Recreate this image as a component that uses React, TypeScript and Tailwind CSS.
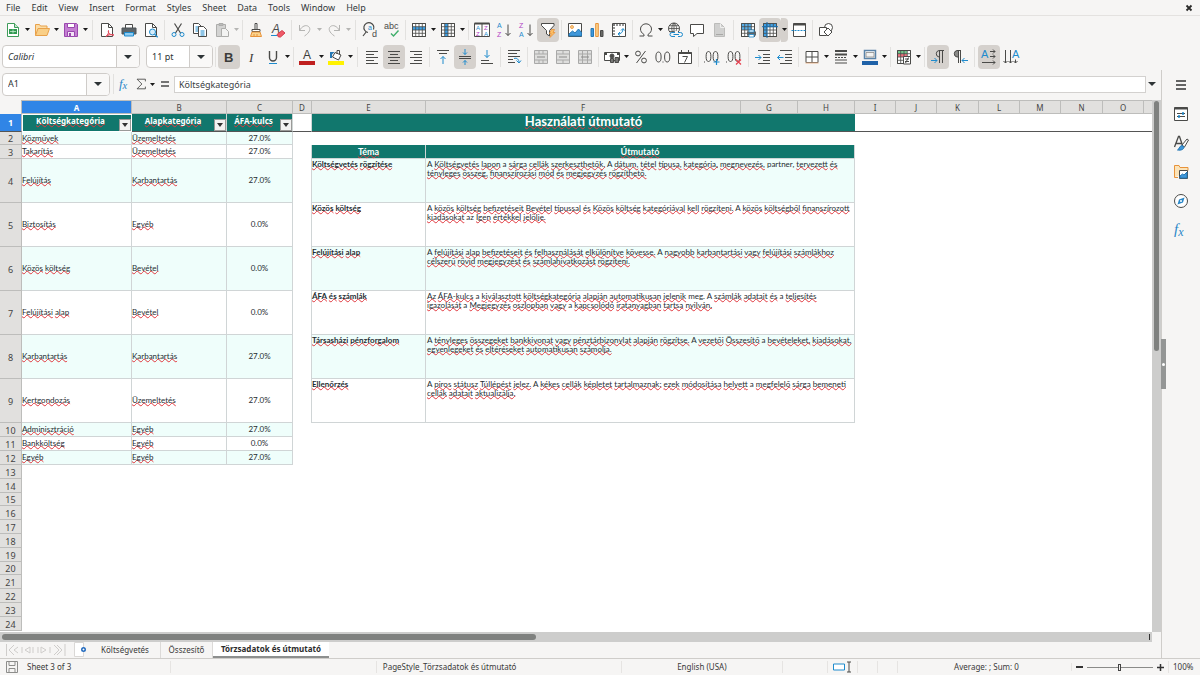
import type { ReactNode } from "react";

const G = "#4a4a48";
const B = "#1e8bcd";

/* ---------- building blocks ---------- */

function Icon({ children, className = "h-4 w-4" }: { children: ReactNode; className?: string }) {
  return (
    <svg viewBox="0 0 16 16" fill="none" stroke={G} className={`overflow-visible ${className}`} aria-hidden="true">
      {children}
    </svg>
  );
}

function Tool({ label, active, children }: { label: string; active?: boolean; children: ReactNode }) {
  return (
    <button
      type="button"
      aria-label={label}
      className={`flex h-6 w-[22px] shrink-0 items-center justify-center rounded-sm ${active ? "bg-[#d5d1cd]" : ""}`}
    >
      <Icon>{children}</Icon>
    </button>
  );
}

function Caret({ off, active }: { off?: boolean; active?: boolean }) {
  return (
    <button
      type="button"
      aria-label="More options"
      className={`flex h-6 w-[7px] shrink-0 items-center justify-center rounded-r-sm ${active ? "bg-[#d5d1cd]" : ""}`}
    >
      <svg viewBox="0 0 5 3" className={`h-[3px] w-[5px] ${off ? "fill-[#b5b5b3]" : "fill-[#1a1a1a]"}`}>
        <path d="M0 0h5L2.5 3z" />
      </svg>
    </button>
  );
}

function Sep({ wide }: { wide?: boolean }) {
  return (
    <div className={`flex h-5 shrink-0 justify-center ${wide ? "w-[7px]" : "w-[5px]"}`}>
      <div className="w-px bg-[#e2e1df]" />
    </div>
  );
}

function Combo({ label, value, className, italic }: { label: string; value: string; className: string; italic?: boolean }) {
  return (
    <div className={`flex h-[23px] shrink-0 overflow-hidden rounded border border-[#cfccc9] bg-white ${className}`}>
      <input
        aria-label={label}
        defaultValue={value}
        className={`w-full min-w-0 flex-1 px-[5px] text-[9px] text-[#2e3436] outline-none ${italic ? "italic" : ""}`}
      />
      <button
        type="button"
        aria-label={`${label} list`}
        className="flex w-[23px] shrink-0 items-center justify-center border-l border-[#cfccc9] bg-[#f9f8f7]"
      >
        <svg viewBox="0 0 8 4" className="h-1 w-2 fill-[#2e3436]">
          <path d="M0 0h8L4 4z" />
        </svg>
      </button>
    </div>
  );
}

/* ---------- icon helpers ---------- */

function Letter({ x, y, size = 8, fill, bold, children }: { x: number; y: number; size?: number; fill: string; bold?: boolean; children: string }) {
  return (
    <text x={x} y={y} fontSize={size} fill={fill} stroke="none" fontWeight={bold ? 700 : 400} fontFamily="Liberation Sans, sans-serif">
      {children}
    </text>
  );
}

function Grid({ fill }: { fill: ReactNode }) {
  return (
    <>
      <path d="M1.5 1.5h13v13h-13z" fill="#fff" />
      {fill}
      <path d="M1.5 1.5h13v13h-13zM4.7 1.5v13M8 1.5v13M11.3 1.5v13M1.5 4.7h13M1.5 8h13M1.5 11.3h13" strokeWidth=".8" />
    </>
  );
}

function Fx() {
  return (
    <text x="1" y="12" fontSize="15" fill="#2a87c8" stroke="none" fontStyle="italic" fontFamily="Liberation Serif, serif">
      f<tspan dy="2" fontSize="12">x</tspan>
    </text>
  );
}

function MergeIcon({ d }: { d: string }) {
  return (
    <>
      <path d="M1.5 1.5h13v13h-13z" fill="#dededd" stroke="#a9a9a8" />
      <path d={d} stroke="#a9a9a8" />
      <path d="M4 8h8" stroke="#8a8a89" />
    </>
  );
}

/* ---------- bars ---------- */

const menus = ["File", "Edit", "View", "Insert", "Format", "Styles", "Sheet", "Data", "Tools", "Window", "Help"];

function MenuBar() {
  return (
    <nav className="flex h-4 items-center gap-px border-b border-[#e4e2e0] pr-[7px] pl-px">
      {menus.map((m) => (
        <button key={m} type="button" className="px-[5px] text-[9px] leading-4 text-[#33393b]">
          {m}
        </button>
      ))}
      <button type="button" aria-label="Close document" className="ml-auto">
        <svg viewBox="0 0 8 8" className="h-2 w-2 stroke-[#2a2a2a]" strokeWidth="1.8">
          <path d="M1.5 1.5l5 5M6.5 1.5l-5 5" />
        </svg>
      </button>
    </nav>
  );
}

function StandardBar() {
  return (
    <div className="flex h-[27px] items-center pl-[2px]">
      <Tool label="New">
        <path d="M2.5 1.5h7l4 4v9h-11z" fill="#fff" stroke="#3f9c5a" />
        <path d="M9.5 1.5v4h4" fill="#c4e5cc" stroke="#3f9c5a" />
        <path d="M4 7h8v5H4z" fill="#2f9a50" stroke="none" />
        <path d="M5 9.500h6M8 7.500v4" stroke="#d6f2dc" strokeWidth=".7" />
      </Tool>
      <Caret />
      <Tool label="Open">
        <path d="M1.500 13.500v-11h4l1 1.500h6.500v3" fill="#fbdca5" stroke="#e8a14a" />
        <path d="M1.500 13.500l2.500-7h11.500l-2.500 7z" fill="#f9cf87" stroke="#e8a14a" />
      </Tool>
      <Caret />
      <Tool label="Save">
        <path d="M1.500 1.500h12l1 1v12h-13z" fill="#c47fd2" stroke="#9a48ae" />
        <path d="M4.500 1.500h7v4h-7z" fill="#fff" stroke="#9a48ae" />
        <path d="M4.500 9.500h7v5h-7z" fill="#f3e4f6" stroke="#9a48ae" />
        <path d="M6 11v3h2v-3z" fill="#9a48ae" stroke="none" />
      </Tool>
      <Caret />
      <Sep wide />
      <Tool label="Export as PDF">
        <path d="M2.500 1.500h7l4 4v9h-11z" fill="#fff" />
        <path d="M9.500 1.500v4h4" />
        <path d="M7 14.500c2-2 3-4 2.500-6-1 2 2 5 5.500 4.500-3-1-6 0-8 1.500z" fill="#f3a1a8" stroke="#e0485a" />
      </Tool>
      <Tool label="Print">
        <path d="M4.500 6V2.500h7V6" fill="#fff" />
        <path d="M1 6h14v6H1z" fill="#5d6468" stroke="#4d5356" />
        <path d="M3.500 10.500h9v3.500h-9z" fill="#8ecbf1" stroke={B} />
      </Tool>
      <Tool label="Print Preview">
        <path d="M2.500 1.500h7l4 4v9h-11z" fill="#fff" />
        <path d="M9.500 1.500v4h4" />
        <circle cx="9.500" cy="10" r="3" fill="#d6edfb" stroke={B} />
        <path d="M11.700 12.200l3 3" stroke={B} strokeWidth="1.300" />
      </Tool>
      <Sep />
      <Tool label="Cut">
        <path d="M4.500 1.500l6 9.500M11.500 1.500L5.500 11" strokeWidth="1.200" />
        <circle cx="4" cy="12.500" r="2" stroke={B} />
        <circle cx="12" cy="12.500" r="2" stroke={B} />
      </Tool>
      <Tool label="Copy">
        <path d="M1.500 1.500h5l3 3v7h-8z" fill="#fff" />
        <path d="M3.500 5h4M3.500 7h3M3.500 9h3" stroke={B} />
        <path d="M6.500 4.500h5l3 3v7h-8z" fill="#fff" />
        <path d="M8.500 9h4M8.500 11h4M8.500 13h4" stroke={B} />
      </Tool>
      <Tool label="Paste">
        <path d="M2.500 2.500h9v12h-9z" fill="#d3d3d2" stroke="#adadab" />
        <path d="M5 1.500h4v2H5z" fill="#bbb" stroke="#adadab" />
        <path d="M7.500 6.500h4l3 3v5h-7z" fill="#f3f3f2" stroke="#adadab" />
      </Tool>
      <Caret off />
      <Sep />
      <Tool label="Clone Formatting">
        <path d="M7 1.500h2v6H7zM4 7.500h8v2H4z" fill="#fff" />
        <path d="M4 10h8l1.500 4.500h-11z" fill="#fbd38d" stroke="#e8933a" />
        <path d="M6 14v-2M9 14v-2" stroke="#e8933a" />
      </Tool>
      <Tool label="Clear Direct Formatting">
        <text x="2" y="11" fontSize="12" fill={G} stroke="none" fontStyle="italic" fontFamily="Liberation Sans, sans-serif">A</text>
        <path d="M1 13.500h6" stroke={B} />
        <path d="M7 12.500l5-4 3 2.500-4.500 4h-2z" fill="#ef5a68" stroke="#d53f4e" />
      </Tool>
      <Sep />
      <Tool label="Undo">
        <path d="M2.500 3v5.500H8M2.500 8.500C5 4 9 2.500 11.500 4.500s1.500 6-4 9.500" stroke="#b3b3b1" />
      </Tool>
      <Caret off />
      <Tool label="Redo">
        <path d="M13.500 3v5.500H8M13.500 8.500C11 4 7 2.500 4.500 4.500s-1.500 6 4 9.500" stroke="#b3b3b1" />
      </Tool>
      <Caret off />
      <Sep wide />
      <Tool label="Find and Replace">
        <path d="M11.500 7.500A5 5 0 1 0 6 10.500M4.500 9.500L1 14" strokeWidth="1.200" />
        <Letter x={6} y={7.500} size={7} fill={B}>a</Letter>
        <Letter x={10} y={15} size={9} fill={G}>d</Letter>
      </Tool>
      <Tool label="Spelling">
        <Letter x={0} y={7} size={9} fill={G}>abc</Letter>
        <path d="M7 11.500l2.500 2.500 5-5.500" stroke="#3fae6a" strokeWidth="1.400" />
      </Tool>
      <Sep />
      <Tool label="Row">
        <Grid fill={<path d="M1.500 4.700h13V8h-13z" fill="#3ea0e6" stroke="none" />} />
      </Tool>
      <Caret />
      <Tool label="Column">
        <Grid fill={<path d="M4.700 1.500H8v13H4.700z" fill="#3ea0e6" stroke="none" />} />
      </Tool>
      <Caret />
      <Sep />
      <Tool label="Sort">
        <path d="M.5 1.500h15v13H.5zM8 2v12" fill="#fff" />
        <path d="M.5 1.500h15" strokeWidth="2" />
        <Letter x={2} y={8} size={6} fill={B}>A</Letter>
        <Letter x={2} y={14} size={6} fill="#b13fc4">Z</Letter>
        <Letter x={10} y={8} size={6} fill="#b13fc4">Z</Letter>
        <Letter x={10} y={14} size={6} fill={B}>A</Letter>
      </Tool>
      <Tool label="Sort Ascending">
        <Letter x={1} y={6} size={7} fill={B}>A</Letter>
        <Letter x={1} y={15} size={7} fill="#b13fc4">Z</Letter>
        <path d="M12 2.500v11M9.500 11l2.500 2.500 2.500-2.500" />
      </Tool>
      <Tool label="Sort Descending">
        <Letter x={1} y={6} size={7} fill="#b13fc4">Z</Letter>
        <Letter x={1} y={15} size={7} fill={B}>A</Letter>
        <path d="M12 2.500v11M9.500 11l2.500 2.500 2.500-2.500" />
      </Tool>
      <Tool label="AutoFilter" active>
        <path d="M1.500 1.500h12.500v2l-4.500 5v5.500l-3-2V8.500l-5-5z" fill="#fff" />
        <path d="M11.500 7.500h3l-1.500 3h2l-5 5 1.200-4H9.500z" fill="#fbbf66" stroke="#e8933a" strokeWidth=".8" />
      </Tool>
      <Sep />
      <Tool label="Insert Image">
        <path d="M1.500 1.500h13v13h-13z" fill="#fff" />
        <circle cx="5" cy="5" r="1.500" fill="#fbd38d" stroke="#e8933a" strokeWidth=".8" />
        <path d="M2 14v-2l3.500-3 2.500 2 3.500-4 3 3.500V14z" fill="#3f97da" stroke="#2578b5" />
      </Tool>
      <Tool label="Insert Chart">
        <path d="M2 6.500h2.500v8H2z" fill="#3f97da" stroke="#2578b5" />
        <path d="M6.700 1.500h2.600v13H6.700z" fill="#fbd38d" stroke="#e8933a" />
        <path d="M11.500 8.500H14v6h-2.500z" fill="#6a6a68" />
      </Tool>
      <Tool label="Pivot Table">
        <path d="M1.500 1.500h13v13h-13z" fill="#fff" />
        <path d="M2 3h12M3 2v12" strokeWidth="1.500" strokeDasharray="2 1" stroke="#777" />
        <path d="M7 12c3 0 5-2 5-5M10 8.500L12 6.500l1.500 2M9 10l-2 2 2 1.500" stroke={B} />
      </Tool>
      <Sep />
      <Tool label="Special Character">
        <path d="M1.500 14h4.500v-1.500C3.500 11 2.500 9 2.500 7a5.500 5.200 0 0 1 11 0c0 2-1 4-3.500 5.500V14h4.500" />
      </Tool>
      <Caret />
      <Tool label="Hyperlink">
        <circle cx="7" cy="6.500" r="5.500" />
        <path d="M7 1v11M1.500 6.500h11M2.500 3.700h9M2.500 9.500h5M7 1c-3 3-3 8 0 11M7 1c3 3 3 6 2 8" strokeWidth=".8" />
        <path d="M6 10h9.500v5H3.500v-5z" fill="#f6f5f4" stroke="none" />
        <path d="M8 10.500H5a2 2 0 0 0 0 4h3M11 10.500h2.500a2 2 0 0 1 0 4H11M6.500 12.500h5.500" stroke={B} />
      </Tool>
      <Tool label="Comment">
        <path d="M1.500 2.500h13v9H8l-3.500 3v-3h-3z" fill="#fff" />
      </Tool>
      <Tool label="Headers and Footers">
        <path d="M3.500 1.500h6l4 4v9h-10z" fill="#d0d0cf" stroke="#bcbcba" />
        <path d="M9.500 1.500v4h4" stroke="#efefee" />
        <path d="M5 12.500h7" stroke="#a8a8a6" />
      </Tool>
      <Sep wide />
      <Tool label="Define Print Area">
        <Grid fill={<path d="M1.500 1.500h10v6.500h-10z" fill="#58aee9" stroke="none" />} />
        <path d="M7 9.500h9v4H7z" fill="#5d6468" stroke="none" />
        <path d="M9 8h5v2H9zM9 12.500h5V15H9z" fill="#fff" stroke={B} strokeWidth=".8" />
      </Tool>
      <Tool label="Freeze Rows and Columns" active>
        <Grid fill={<path d="M1.500 1.500h13v3.200H4.700v9.800H1.500z" fill="#3ea0e6" stroke="none" />} />
        <path d="M5 0v16M0 4.700h16" stroke="#1b70b0" />
      </Tool>
      <Caret active />
      <Tool label="Split Window">
        <path d="M2.500 1.500h12v13h-12z" fill="#fff" />
        <path d="M2.500 2.500h12" strokeWidth="2" />
        <path d="M.5 8.500h15" stroke={B} strokeDasharray="2 1" />
      </Tool>
      <Sep />
      <Tool label="Show Draw Functions">
        <circle cx="10.500" cy="5.500" r="4" fill="#fff" />
        <path d="M1.500 5.500h7v8h-7z" fill="#fff" />
        <path d="M10 6l4 4-4 4-4-4z" fill="#fff" />
      </Tool>
    </div>
  );
}

function FormattingBar() {
  return (
    <div className="flex h-[27px] items-center pl-[2px]">
      <Combo label="Font Name" value="Calibri" italic className="mr-[6px] w-[138px]" />
      <Combo label="Font Size" value="11 pt" className="w-[67px]" />
      <Sep />
      <Tool label="Bold" active>
        <Letter x={3} y={13} size={13} bold fill="#3c3c3a">B</Letter>
      </Tool>
      <Tool label="Italic">
        <text x="6" y="13" fontSize="13" fill="#3c3c3a" stroke="none" fontStyle="italic" fontFamily="Liberation Serif, serif">I</text>
      </Tool>
      <Tool label="Underline">
        <path d="M4.500 2v6.500a3.500 3.500 0 0 0 7 0V2" strokeWidth="1.400" />
        <path d="M4 14.500h8" stroke={B} />
      </Tool>
      <Caret />
      <Sep />
      <Tool label="Font Color">
        <Letter x={4} y={10} size={12} fill="#3c3c3a">A</Letter>
        <path d="M0 12h16v4H0z" fill="#c0201f" stroke="none" />
      </Tool>
      <Caret />
      <Tool label="Highlighting">
        <path d="M7 3.500l6 2.500-2.500 5-6-3z" fill="#fff" />
        <path d="M9 5V1.500h2.500V5" />
        <path d="M2 9V3h4.500L4 5.500V9z" fill="#2578b5" stroke="none" />
        <path d="M0 12h16v4H0z" fill="#fff200" stroke="none" />
      </Tool>
      <Caret />
      <Sep wide />
      <Tool label="Align Left">
        <path d="M2 2.500h12M2 5.500h8M2 8.500h12M2 11.500h8M2 14.500h12" />
      </Tool>
      <Tool label="Center Horizontally" active>
        <path d="M2 2.500h12M4 5.500h8M2 8.500h12M4 11.500h8M2 14.500h12" />
      </Tool>
      <Tool label="Align Right">
        <path d="M2 2.500h12M6 5.500h8M2 8.500h12M6 11.500h8M2 14.500h12" />
      </Tool>
      <Sep />
      <Tool label="Align Top">
        <path d="M2 1.500h12M4 4.500h8" />
        <path d="M8 15V7.500M5.500 10L8 7.500l2.500 2.500" stroke={B} />
      </Tool>
      <Tool label="Center Vertically" active>
        <path d="M2 7.500h12M2 9.500h12" />
        <path d="M8 0v5.500M6 3.500l2 2 2-2M8 16v-4.500M6 13.500l2-2 2 2" stroke={B} />
      </Tool>
      <Tool label="Align Bottom">
        <path d="M2 11.500h8M2 14.500h12" />
        <path d="M8 1v7.500M5.500 6L8 8.500 10.500 6" stroke={B} />
      </Tool>
      <Sep />
      <Tool label="Wrap Text">
        <path d="M2 1.500h12M2 4.500h9M2 7.500h12M2 10.500h5M2 13.500h7" />
        <path d="M8 9.500c3-1 5 1 5 4M10.500 11.500l2.500 2.500 2-2.500" stroke={B} />
      </Tool>
      <Sep />
      <Tool label="Merge and Center">
        <MergeIcon d="M1.500 5h13M1.500 11h13M6 1.500V5M10 1.500V5M6 11v3.500M10 11v3.500" />
      </Tool>
      <Tool label="Merge Cells">
        <MergeIcon d="M1.500 5h13M1.500 11h13M8 1.500V5M8 11v3.500" />
      </Tool>
      <Tool label="Unmerge Cells">
        <MergeIcon d="M5.500 1.500v13M10.500 1.500v13M1.500 5h13M1.500 11h13" />
      </Tool>
      <Sep />
      <Tool label="Format as Currency">
        <path d="M.5 3.500h15v8H.5z" fill="#fff" />
        <path d="M1 4h2v2H1zM13 4h2v2h-2z" fill={G} stroke="none" />
        <circle cx="8" cy="7" r="2" fill={G} />
        <path d="M6.500 9.500h3v4h-3zM11 8.500h3.500v5H11z" fill="#777775" />
      </Tool>
      <Caret />
      <Tool label="Format as Percent">
        <circle cx="5" cy="4.500" r="2.400" />
        <circle cx="11" cy="11.500" r="2.400" />
        <path d="M12.500 2l-9 12" />
      </Tool>
      <Tool label="Format as Number">
        <ellipse cx="3.500" cy="8" rx="2.600" ry="5" />
        <ellipse cx="12.200" cy="8" rx="2.600" ry="5" />
        <path d="M7.500 12.500h1v1h-1z" fill={G} stroke="none" />
      </Tool>
      <Tool label="Format as Date">
        <path d="M1.500 3.500h13v11h-13z" fill="#fff" />
        <path d="M1.500 4h13" strokeWidth="2" />
        <path d="M4.500 1v3M11.500 1v3M5.500 7.500h5l-3 6" />
      </Tool>
      <Sep />
      <Tool label="Add Decimal Place">
        <path d="M0 12.500h1v1H0z" fill={G} stroke="none" />
        <ellipse cx="4.500" cy="7.500" rx="2.400" ry="5" />
        <ellipse cx="11.500" cy="7.500" rx="2.400" ry="5" />
        <path d="M12.500 10v6M9.500 13h6" stroke={B} strokeWidth="1.200" />
      </Tool>
      <Tool label="Delete Decimal Place">
        <path d="M0 12.500h1v1H0z" fill={G} stroke="none" />
        <ellipse cx="4.500" cy="7.500" rx="2.400" ry="5" />
        <ellipse cx="11.500" cy="7.500" rx="2.400" ry="5" />
        <path d="M10 10.500l5 5M15 10.500l-5 5" stroke="#e5404f" strokeWidth="1.200" />
      </Tool>
      <Sep wide />
      <Tool label="Increase Indent">
        <path d="M3 1.500h12M8 5.500h7M8 8.500h7M8 11.500h7M3 14.500h12" />
        <path d="M0 8.500h6M3.500 6L6 8.500 3.500 11" stroke={B} />
      </Tool>
      <Tool label="Decrease Indent">
        <path d="M3 1.500h12M8 5.500h7M8 8.500h7M8 11.500h7M3 14.500h12" />
        <path d="M6.500 8.500h-6M3 6L.5 8.500 3 11" stroke={B} />
      </Tool>
      <Sep />
      <Tool label="Borders">
        <path d="M2 2.500h12v11H2zM8 2.500v11M2 8h12" fill="#fff" />
        <path d="M1.500 14h13" stroke="#e8b48a" />
      </Tool>
      <Caret />
      <Tool label="Border Style">
        <path d="M2 2h12" strokeWidth="2" />
        <path d="M2 5.500h12" strokeWidth="2" />
        <path d="M2 8.500h12" strokeDasharray="2 1" />
        <path d="M2 11h12M2 14h12" />
      </Tool>
      <Caret />
      <Tool label="Border Color">
        <path d="M2.500 1.500h11v8h-11z" fill="#fff" stroke="#5b84a8" strokeWidth="1.500" />
        <path d="M4 3.500h8V8H4z" fill="#f3f3f2" stroke="#8a8a89" strokeWidth=".8" />
        <path d="M0 12h16v4H0z" fill="#1f62a8" stroke="none" />
      </Tool>
      <Caret />
      <Sep />
      <Tool label="Conditional Formatting">
        <Grid fill={<><path d="M2 2h9v3H2z" fill="#74c78c" stroke="none" /><path d="M2 5h9v3H2z" fill="#ee7480" stroke="none" /></>} />
        <path d="M7.500 7.500h7v7.500h-7z" fill="#fff" />
        <path d="M9 10h4M9 12.500h4M12.500 8.500l-3 5.500" />
      </Tool>
      <Caret />
      <Sep />
      <Tool label="Left-To-Right" active>
        <path d="M14 1.500H9a3.300 3.300 0 0 0 0 6.500h.5M9.500 1.500V14M12.500 1.500V14" />
        <path d="M1 11.500h6M4.500 9L7 11.500 4.500 14" stroke={B} />
      </Tool>
      <Tool label="Right-To-Left">
        <path d="M9 1.500H5a3.300 3.300 0 0 0 0 6.500h1.500V1.500" fill="#8a8a88" />
        <path d="M6.500 1.500V14M8.500 1.500V14" />
        <path d="M16 11.500h-6M12.500 9L10 11.500l2.500 2.500" stroke={B} />
      </Tool>
      <Sep wide />
      <Tool label="Text direction from left to right" active>
        <Letter x={0} y={9} size={11} fill={B}>A</Letter>
        <path d="M9 2.500h5M9 7.500h5M1 13.500h13M12 .5l2 2-2 2M12 5.500l2 2-2 2M12 11.500l2 2-2 2" />
      </Tool>
      <Tool label="Text direction from top to bottom">
        <Letter x={9} y={9} size={11} fill={B}>A</Letter>
        <path d="M2.500 1v13M7.500 1v13M12.500 10.500V14M.5 12l2 2 2-2M5.500 12l2 2 2-2M10.500 12l2 2 2-2" />
      </Tool>
    </div>
  );
}

function FormulaBar() {
  return (
    <div className="flex h-[30px] shrink-0 items-center pb-[2px] pl-[2px]">
      <Combo label="Name Box" value="A1" className="w-[108px]" />
      <Sep wide />
      <button type="button" aria-label="Function Wizard" className="flex w-4 justify-center">
        <Icon className="h-[14px] w-[14px]"><Fx /></Icon>
      </button>
      <button type="button" aria-label="Select Function" className="flex w-4 justify-center">
        <Icon className="h-[14px] w-[14px]"><path d="M13 5V2.500H3.500L9 8l-5.500 5.500H13V11" /></Icon>
      </button>
      <Caret />
      <button type="button" aria-label="Formula" className="mx-[3px] flex w-3 justify-center">
        <svg viewBox="0 0 8 6" className="h-[6px] w-2 stroke-[#4a4a48]" strokeWidth="1.5"><path d="M0 1h8M0 5h8" /></svg>
      </button>
      <input
        aria-label="Input line"
        defaultValue="Költségkategória"
        className="h-[17px] min-w-0 flex-1 border border-[#d3d1cf] bg-white px-1 text-[9px] text-[#3a4042] outline-none"
      />
      <button type="button" aria-label="Expand Formula Bar" className="flex w-[15px] justify-center pr-1">
        <svg viewBox="0 0 8 4" className="h-1 w-2 fill-[#2e3436]"><path d="M0 0h8L4 4z" /></svg>
      </button>
    </div>
  );
}

/* ---------- sheet ---------- */

const columns = "ABCDEFGHIJKLMNO".split("");

const categories = [
  ["Közművek", "Üzemeltetés", "27.0%"],
  ["Takarítás", "Üzemeltetés", "27.0%"],
  ["Felújítás", "Karbantartás", "27.0%"],
  ["Biztosítás", "Egyéb", "0.0%"],
  ["Közös költség", "Bevétel", "0.0%"],
  ["Felújítási alap", "Bevétel", "0.0%"],
  ["Karbantartás", "Karbantartás", "27.0%"],
  ["Kertgondozás", "Üzemeltetés", "27.0%"],
  ["Adminisztráció", "Egyéb", "27.0%"],
  ["Bankköltség", "Egyéb", "0.0%"],
  ["Egyéb", "Egyéb", "27.0%"],
];

const guide: Record<number, [string, string, string]> = {
  4: [
    "Költségvetés rögzítése",
    "A Költségvetés lapon a sárga cellák szerkeszthetők. A dátum, tétel típusa, kategória, megnevezés, partner, tervezett és",
    "tényleges összeg, finanszírozási mód és megjegyzés rögzíthető.",
  ],
  5: [
    "Közös költség",
    "A közös költség befizetéseit Bevétel típussal és Közös költség kategóriával kell rögzíteni. A közös költségből finanszírozott",
    "kiadásokat az Igen értékkel jelölje.",
  ],
  6: [
    "Felújítási alap",
    "A felújítási alap befizetéseit és felhasználását elkülönítve kövesse. A nagyobb karbantartási vagy felújítási számlákhoz",
    "célszerű rövid megjegyzést és számlahivatkozást rögzíteni.",
  ],
  7: [
    "ÁFA és számlák",
    "Az ÁFA-kulcs a kiválasztott költségkategória alapján automatikusan jelenik meg. A számlák adatait és a teljesítés",
    "igazolását a Megjegyzés oszlopban vagy a kapcsolódó iratanyagban tartsa nyilván.",
  ],
  8: [
    "Társasházi pénzforgalom",
    "A tényleges összegeket bankkivonat vagy pénztárbizonylat alapján rögzítse. A vezetői Összesítő a bevételeket, kiadásokat,",
    "egyenlegeket és eltéréseket automatikusan számolja.",
  ],
  9: [
    "Ellenőrzés",
    "A piros státusz Túllépést jelez. A kékes cellák képletet tartalmaznak: ezek módosítása helyett a megfelelő sárga bemeneti",
    "cellák adatait aktualizálja.",
  ],
};

const known = ["A", "a", "az", "partner,", "meg."];

// Words missing from the dictionary get the red wave
function Spell({ text }: { text: string }) {
  return (
    <>
      {text.split(" ").map((w, i) => (
        <span key={i}>
          {i > 0 && " "}
          {known.includes(w) ? w : (
            <span className="underline decoration-[#e0383e] decoration-wavy decoration-1 -underline-offset-1 [text-decoration-skip-ink:none]">{w}</span>
          )}
        </span>
      ))}
    </>
  );
}

function rowHeight(n: number) {
  if (n === 2 || n === 15 || n === 20) return "h-[13px]";
  return n >= 4 && n <= 9 ? "h-11" : "h-[14px]";
}

function HeadCell({ text, selected }: { text: string; selected?: boolean }) {
  return (
    <td className={`border-r border-b border-b-[#555] bg-[#11776d] p-0 ${selected ? "border-r-[#2b2b2b] outline outline-1 -outline-offset-1 outline-white" : "border-r-[#cfd6d5]"}`}>
      <div className="flex h-[17px] items-end">
        <span className="flex-1 self-start text-center font-['Noto_Sans'] text-[8px] leading-[14px] font-bold text-white">
          <Spell text={text} />
        </span>
        <button type="button" aria-label={`Filter ${text}`} className="flex h-3 w-3 shrink-0 items-center justify-center border border-[#9a9a98] bg-[#f3f3f2]">
          <svg viewBox="0 0 6 4" className="h-1 w-[6px] fill-[#333]"><path d="M0 0h6L3 4z" /></svg>
        </button>
      </div>
    </td>
  );
}

function Sheet() {
  const edge = "border-r border-b border-[#d0d5d6]";
  return (
    <table className="w-full table-fixed border-separate border-spacing-0 font-['Lato'] text-[8px] leading-[9px] text-[#1f2d32]">
      <colgroup>
        <col className="w-[22px]" /><col className="w-[110px]" /><col className="w-[95px]" /><col className="w-[66px]" />
        <col className="w-[19px]" /><col className="w-[114px]" /><col className="w-[315px]" /><col className="w-[57px]" />
        <col className="w-[57px]" /><col className="w-[41px]" /><col className="w-[41px]" /><col className="w-[42px]" />
        <col className="w-[41px]" /><col className="w-[41px]" /><col className="w-[42px]" /><col className="w-[41px]" /><col />
      </colgroup>
      <thead className="font-['Noto_Sans'] text-[8px]">
        <tr className="h-[14px]">
          <th aria-label="Select all" className="border-r border-[#bdbdbb] bg-[#f6f5f4] p-0" />
          {columns.map((c) => (
            <th
              key={c}
              className={`border-t border-r border-b border-[#bdbdbb] p-0 ${c === "A" ? "bg-[#3085e6] font-bold text-white" : "bg-[#e1e0de] font-normal text-[#444]"}`}
            >
              {c}
            </th>
          ))}
          <th className="border-t border-b border-[#bdbdbb] bg-[#e1e0de] p-0" />
        </tr>
      </thead>
      <tbody>
        <tr className="h-[18px]">
          <th className="border-r border-b border-r-[#bdbdbb] border-b-[#555] bg-[#3085e6] p-0 font-['Noto_Sans'] text-[9px] text-white">1</th>
          <HeadCell text="Költségkategória" selected />
          <HeadCell text="Alapkategória" />
          <HeadCell text="ÁFA-kulcs" />
          <td className="border-r border-b border-r-[#d0d5d6] border-b-[#555] p-0" />
          <td colSpan={4} className="border-b border-[#555] bg-[#11776d] p-0 text-center align-top text-[13px] leading-[15px] font-bold text-white">
            <Spell text="Használati útmutató" />
          </td>
          <td colSpan={8} className="border-b border-[#555] p-0" />
        </tr>
        {Array.from({ length: 23 }, (_, i) => i + 2).map((n) => {
          const cat = categories[n - 2];
          const tip = guide[n];
          const tint = n % 2 === 0 ? "bg-[#effefb]" : "bg-white";
          return (
            <tr key={n} className={rowHeight(n)}>
              <th className="border-r border-b border-[#bdbdbb] bg-[#e1e0de] p-0 pt-px font-['Noto_Sans'] text-[9px] font-normal text-[#444]">{n}</th>
              {cat ? (
                <>
                  <td className={`${edge} ${tint} p-0`}><Spell text={cat[0]} /></td>
                  <td className={`${edge} ${tint} p-0`}><Spell text={cat[1]} /></td>
                  <td className={`${edge} ${tint} p-0 text-center`}>{cat[2]}</td>
                </>
              ) : (
                <td colSpan={3} className="p-0" />
              )}
              <td className={`p-0 ${n >= 3 && n <= 9 ? "border-r border-[#d0d5d6]" : ""}`} />
              {n === 3 && (
                <>
                  <td className={`${edge} bg-[#11776d] p-0 text-center text-[9px] font-bold text-white`}><Spell text="Téma" /></td>
                  <td colSpan={3} className={`${edge} bg-[#11776d] p-0 text-center text-[9px] font-bold text-white`}><Spell text="Útmutató" /></td>
                </>
              )}
              {tip && (
                <>
                  <td className={`${edge} ${tint} p-0 pt-px align-top font-bold whitespace-nowrap`}><Spell text={tip[0]} /></td>
                  <td colSpan={3} className={`${edge} ${tint} p-0 pt-px pl-px align-top whitespace-nowrap`}>
                    <Spell text={tip[1]} /><br /><Spell text={tip[2]} />
                  </td>
                </>
              )}
              <td colSpan={n === 3 || tip ? 8 : 12} className="p-0" />
            </tr>
          );
        })}
      </tbody>
    </table>
  );
}

function SheetTabs() {
  return (
    <div className="flex h-4 shrink-0 items-stretch text-[8px] text-[#3a3a3a]">
      <button type="button" aria-label="Scroll sheets" className="ml-[6px] flex items-center">
        <svg viewBox="0 0 60 12" className="h-3 w-[60px]" fill="none" stroke="#cfcdcb">
          <path d="M.5 0v12M8 1L3 6l5 5M12 3L8 6l4 3M16 3v6M24 3l-5 3 5 3zM27 3v6M32 3v6M35 3l5 3-5 3zM44 3v6M48 1l5 5-5 5M51 1l5 5-5 5M59 0v12" />
        </svg>
      </button>
      <button type="button" aria-label="Add sheet" className="ml-2 flex w-3 items-center justify-center">
        <svg viewBox="0 0 12 16" className="h-4 w-3">
          <path d="M.5.5h9v14h-9z" fill="#fff" stroke="#dad8d6" />
          <circle cx="9.500" cy="7.500" r="2.500" fill="#2a6fc0" />
          <path d="M8.500 7.500h2M9.500 6.500v2" stroke="#fff" strokeWidth=".8" />
        </svg>
      </button>
      <button type="button" className="ml-1 w-[70px] px-2">Költségvetés</button>
      <button type="button" className="w-[53px] border-x border-[#dcdad8]">Összesítő</button>
      <button type="button" className="w-[116px] border-b-2 border-[#8d8f8e] bg-white font-bold text-[#2b2b2b]">Törzsadatok és útmutató</button>
    </div>
  );
}

function Sidebar() {
  return (
    <aside className="relative flex w-[39px] shrink-0 flex-col items-center gap-[13px] border-l border-[#cfcdca] pt-[7px]">
      <button type="button" aria-label="Hide sidebar" className="absolute top-[269px] -left-px flex h-[50px] w-[5px] items-center justify-center bg-[#949695]">
        <span className="h-[3px] w-[3px] rounded-full bg-white" />
      </button>
      <button type="button" aria-label="Sidebar settings">
        <Icon><path d="M3 4h10M3 8h10M3 12h10" stroke="#333" strokeWidth="1.500" /></Icon>
      </button>
      <button type="button" aria-label="Properties">
        <Icon>
          <path d="M1.500 1.500h13v13h-13z" fill="#fff" />
          <path d="M1.500 2.500h13" strokeWidth="2" />
          <path d="M4 7.500h8M4 10.500h8" />
          <path d="M10 6v3M6 9v3" stroke={B} strokeWidth="1.500" />
        </Icon>
      </button>
      <button type="button" aria-label="Styles">
        <Icon>
          <path d="M1.500 12L5.500 1.500h1L10 12M3 8.500h6" strokeWidth="1.300" />
          <path d="M9 10l5-6 1.500 1-4 7z" fill="#fff" />
          <path d="M4.500 15c1.500 0 1.500-4 4.500-4.500L11 12c0 2.500-3 3.500-6.500 3z" fill="#3f97da" stroke="#2578b5" />
        </Icon>
      </button>
      <button type="button" aria-label="Gallery">
        <Icon>
          <path d="M1.500 13.500v-12H6l1 2h8v3M1.500 13.500H5" fill="#fbe3b8" stroke="#e8933a" />
          <path d="M6.500 6.500h8v8h-8z" fill="#fff" />
          <path d="M7 14v-2l2.500-2 1.500 1 3-3v6z" fill="#3f97da" stroke="#2578b5" />
        </Icon>
      </button>
      <button type="button" aria-label="Navigator">
        <Icon>
          <circle cx="8" cy="8" r="6.500" fill="#fff" />
          <path d="M11.500 4.500L10 9.500l-5.500 2L6 6.500z" fill="#2a87c8" stroke="none" />
          <circle cx="8" cy="8" r="1" fill="#fff" stroke="none" />
        </Icon>
      </button>
      <button type="button" aria-label="Functions"><Icon><Fx /></Icon></button>
    </aside>
  );
}

function StatusBar() {
  return (
    <footer className="flex h-[17px] shrink-0 items-center border-t border-[#cfcdca] text-[8px] text-[#3a3a3a]">
      <button type="button" aria-label="Save status" className="mr-[3px] ml-1">
        <Icon>
          <path d="M2.500 2.500h11v11h-11zM5 2.500v4h6v-4M5 13.500V9.500h6v4" stroke="#8d8d8b" />
        </Icon>
      </button>
      <span className="w-[147px] pl-1">Sheet 3 of 3</span>
      <span className="min-w-0 flex-[208] border-l border-[#e6e4e2]">&nbsp;</span>
      <span className="min-w-0 flex-[242] border-l border-[#e6e4e2] pl-[6px] whitespace-nowrap">PageStyle_Törzsadatok és útmutató</span>
      <span className="min-w-0 flex-[162] border-l border-[#e6e4e2] text-center">English (USA)</span>
      <span className="min-w-0 flex-[45] border-l border-[#e6e4e2]">&nbsp;</span>
      <span className="flex w-[30px] items-center justify-center border-l border-[#e6e4e2]">
        <svg viewBox="0 0 20 12" className="h-3 w-5" fill="none">
          <path d="M1.500 3h11v6h-11z" fill="#fff" stroke={B} />
          <path d="M15 1h4M15 11h4M17 1v10" stroke="#4a4a48" />
        </svg>
      </span>
      <span className="w-5 border-l border-[#e6e4e2]">&nbsp;</span>
      <span className="w-5 border-l border-[#e6e4e2]">&nbsp;</span>
      <span className="w-[174px] border-l border-[#e6e4e2] pl-1 text-center">Average: ; Sum: 0</span>
      <div className="flex items-center gap-1 border-l border-[#e6e4e2] px-1">
        <button type="button" aria-label="Zoom out" className="h-[2px] w-[7px] bg-[#333]" />
        <input
          type="range"
          aria-label="Zoom"
          min={20}
          max={180}
          defaultValue={98}
          className="h-2 w-[66px] appearance-none bg-transparent [&::-webkit-slider-runnable-track]:h-px [&::-webkit-slider-runnable-track]:bg-[#8b8b89] [&::-webkit-slider-thumb]:-mt-[3px] [&::-webkit-slider-thumb]:h-[7px] [&::-webkit-slider-thumb]:w-[3px] [&::-webkit-slider-thumb]:appearance-none [&::-webkit-slider-thumb]:border [&::-webkit-slider-thumb]:border-[#444] [&::-webkit-slider-thumb]:bg-[#f6f5f4]"
        />
        <button type="button" aria-label="Zoom in">
          <svg viewBox="0 0 7 7" className="h-[7px] w-[7px] stroke-[#333]" strokeWidth="1.5"><path d="M0 3.500h7M3.500 0v7" /></svg>
        </button>
      </div>
      <span className="w-8 border-l border-[#e6e4e2] pl-1">100%</span>
    </footer>
  );
}

export default function App() {
  return (
    <div className="flex h-screen flex-col overflow-hidden bg-[#f6f5f4] font-['Noto_Sans',sans-serif]">
      <MenuBar />
      <StandardBar />
      <FormattingBar />
      <div className="flex min-h-0 flex-1">
        <main className="flex min-w-0 flex-1 flex-col">
          <FormulaBar />
          <div className="flex min-h-0 flex-1">
            <div className="min-w-0 flex-1 overflow-hidden bg-white">
              <Sheet />
            </div>
            <div className="w-[9px] shrink-0 bg-[#cdcdcc] px-[2px] pt-px">
              <div className="h-[47%] rounded-full bg-[#7f817f]" />
            </div>
          </div>
          <div className="mr-[9px] flex h-[10px] shrink-0 items-center bg-[#cdcdcc] px-[2px]">
            <div className="h-[6px] w-[46.5%] rounded-full bg-[#7f817f]" />
            <div className="ml-auto h-[6px] w-px bg-[#333]" />
          </div>
          <SheetTabs />
        </main>
        <Sidebar />
      </div>
      <StatusBar />
    </div>
  );
}
